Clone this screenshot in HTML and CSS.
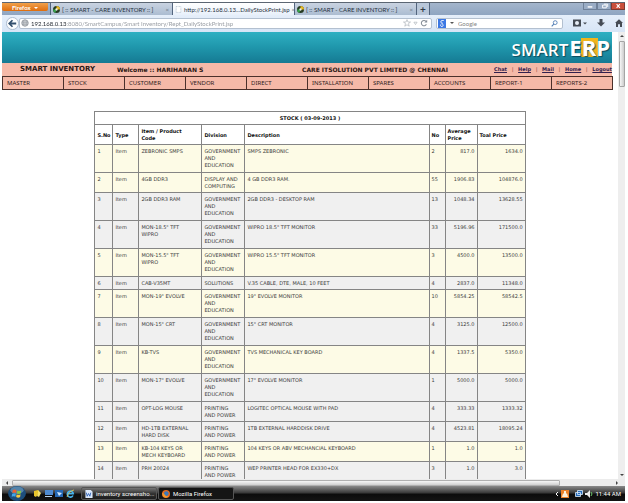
FILE: index.html
```html
<!DOCTYPE html>
<html lang="en">
<head>
<meta charset="utf-8">
<title>Smart Inventory - Daily Stock</title>
<link rel="stylesheet" href="styles.css">
</head>
<body>
<header class="tabs">
  <button class="firefox">Firefox <span class="caret"></span></button>
  <button class="tab"><svg class="fav" viewBox="0 0 12 12"><circle cx="6" cy="6" r="6" fill="#263b22"/><path d="M6 6V0a6 6 0 0 1 6 6z" fill="#e8b820"/><path d="M6 6H0a6 6 0 0 0 4 5.600z" fill="#35a34a"/><circle cx="6" cy="6" r="2" fill="#f4f4e8"/></svg><span>[ :: SMART - CARE INVENTORY :: ]</span><i>×</i></button>
  <button class="tab active"><svg class="fav" viewBox="0 0 12 12"><path d="M2 1h8v10H2z" fill="#fff" stroke="#9ab" stroke-dasharray="1.500 1"/></svg><span>http://192.168.0.13...DailyStockPrint.jsp</span><i>×</i></button>
  <button class="tab"><svg class="fav" viewBox="0 0 12 12"><circle cx="6" cy="6" r="6" fill="#263b22"/><path d="M6 6V0a6 6 0 0 1 6 6z" fill="#e8b820"/><path d="M6 6H0a6 6 0 0 0 4 5.600z" fill="#35a34a"/><circle cx="6" cy="6" r="2" fill="#f4f4e8"/></svg><span>[ :: SMART - CARE INVENTORY :: ]</span><i>×</i></button>
  <button class="newtab" aria-label="New tab">+</button>
  <div class="winbtns">
    <button aria-label="Minimize"><svg viewBox="0 0 13 6"><path d="M4 4h5" stroke="#fff" stroke-width="1.500"/></svg></button>
    <button aria-label="Restore"><svg viewBox="0 0 13 6"><path d="M5 2h4v3H5zM6.500 1h4v3" fill="none" stroke="#fff"/></svg></button>
    <button class="close" aria-label="Close"><svg viewBox="0 0 13 6"><path d="M5 1l3.500 4M8.500 1L5 5" stroke="#fff" stroke-width="1.200"/></svg></button>
  </div>
</header>
<div class="toolbar">
  <button class="back" aria-label="Back"><svg viewBox="0 0 14 14"><circle cx="7" cy="7" r="6.500" fill="#fdfeff" stroke="#a9b9cc"/><path d="M11 7H4M7 3.500L3.500 7L7 10.500" fill="none" stroke="#34506e" stroke-width="1.900"/></svg></button>
  <div class="address">
    <svg class="globe" viewBox="0 0 10 10"><circle cx="5" cy="5" r="4" fill="#e5e7ea" stroke="#858b92"/><path d="M1 4h8M1 6.500h8M5 1v8M3 2v6M7 2v6" stroke="#8c9299" stroke-width=".7"/></svg>
    <input class="url" aria-label="Address" value="192.168.0.13:8080/SmartCampus/Smart Inventory/Rept_DailyStockPrint.jsp">
    <svg class="star" viewBox="0 0 10 10"><path d="M5 .8l1.200 3h3.200L6.800 5.800l1 3.200L5 7.200 2.200 9l1-3.200L.6 3.800h3.200z" fill="#fff" stroke="#a7adb5" stroke-width=".8"/></svg>
    <svg class="drop" viewBox="0 0 6 10"><path d="M1 4h4L3 7z" fill="#fff" stroke="#a0a7af" stroke-width=".7"/></svg>
    <svg class="reload" viewBox="0 0 10 10"><path d="M8 6.500A3.300 3.300 0 1 1 7.500 3" fill="none" stroke="#848c96" stroke-width="1.300"/><path d="M9 .8v3.600H5.500z" fill="#848c96"/></svg>
  </div>
  <div class="search">
    <svg class="google" viewBox="0 0 8 9"><path d="M0 0h8v9H0z" fill="#3c78e4"/><path d="M5.800 1.500H4a1.300 1.300 0 1 0 .6 2.500q-1 .8 0 1.200A1.300 1.300 0 1 1 3 5.300" fill="none" stroke="#fff" stroke-width=".8"/></svg>
    <span class="caret dark"></span>
    <input class="query" aria-label="Search" placeholder="Google">
    <svg class="lens" viewBox="0 0 8 8"><circle cx="4.800" cy="3" r="2.200" fill="none" stroke="#4f7db5"/><path d="M3.200 4.700L.8 7.300" stroke="#4f7db5" stroke-width="1.200"/></svg>
  </div>
  <button class="tool wide" aria-label="Bookmarks"><svg viewBox="0 0 14 8"><path d="M0 .5h8v7H0z" fill="#454b54"/><circle cx="4" cy="4" r="2" fill="#e8eef6"/><path d="M10 3.500h4l-2 2z" fill="#454b54"/></svg></button>
  <button class="tool" aria-label="Downloads"><svg viewBox="0 0 8 8"><path d="M2.500 0h3v3.500H8L4 7.500 0 3.500h2.500z" fill="#454b54"/></svg></button>
  <button class="tool" aria-label="Home"><svg viewBox="0 0 8 8"><path d="M4 .2L8 4H7v4H5V5.200H3V8H1V4H0z" fill="#454b54"/></svg></button>
</div>
<div class="view">
  <main class="page">
    <div class="banner"><div class="logo">SMART<b>E<em>R</em>P</b></div></div>
    <div class="infobar">
      <strong class="app">SMART INVENTORY</strong>
      <strong class="welcome">Welcome :: HARIHARAN S</strong>
      <strong class="company">CARE ITSOLUTION PVT LIMITED @ CHENNAI</strong>
      <nav class="links"><a href="#">Chat</a>|<a href="#">Help</a>|<a href="#">Mail</a>|<a href="#">Home</a>|<a href="#">Logout</a></nav>
    </div>
    <nav class="menu"><a href="#">MASTER</a><a href="#">STOCK</a><a href="#">CUSTOMER</a><a href="#">VENDOR</a><a href="#">DIRECT</a><a href="#">INSTALLATION</a><a href="#">SPARES</a><a href="#">ACCOUNTS</a><a href="#">REPORT-1</a><a href="#">REPORTS-2</a></nav>
    <table class="stock">
      <colgroup><col class="c-sno"><col class="c-type"><col class="c-item"><col class="c-div"><col><col class="c-no"><col class="c-avg"><col class="c-total"></colgroup>
      <thead>
        <tr class="one"><th class="title" colspan="8">STOCK ( 03-09-2013 )</th></tr>
        <tr class="two"><th>S.No</th><th>Type</th><th>Item / Product<br>Code</th><th>Division</th><th>Description</th><th>No</th><th>Average<br>Price</th><th>Toal Price</th></tr>
      </thead>
      <tbody>
        <tr class="three cream"><td>1</td><td>Item</td><td>ZEBRONIC SMPS</td><td>GOVERNMENT<br>AND<br>EDUCATION</td><td>SMPS ZEBRONIC</td><td>2</td><td>817.0</td><td>1634.0</td></tr>
        <tr class="two cream"><td>2</td><td>Item</td><td>4GB DDR3</td><td>DISPLAY AND<br>COMPUTING</td><td>4 GB DDR3 RAM.</td><td>55</td><td>1906.83</td><td>104876.0</td></tr>
        <tr class="three"><td>3</td><td>Item</td><td>2GB DDR3 RAM</td><td>GOVERNMENT<br>AND<br>EDUCATION</td><td>2GB DDR3 - DESKTOP RAM</td><td>13</td><td>1048.34</td><td>13628.55</td></tr>
        <tr class="three"><td>4</td><td>Item</td><td>MON-18.5" TFT<br>WIPRO</td><td>GOVERNMENT<br>AND<br>EDUCATION</td><td>WIPRO 18.5" TFT MONITOR</td><td>33</td><td>5196.96</td><td>171500.0</td></tr>
        <tr class="three cream"><td>5</td><td>Item</td><td>MON-15.5" TFT<br>WIPRO</td><td>GOVERNMENT<br>AND<br>EDUCATION</td><td>WIPRO 15.5" TFT MONITOR</td><td>3</td><td>4500.0</td><td>13500.0</td></tr>
        <tr class="one"><td>6</td><td>Item</td><td>CAB-V35MT</td><td>SOLUTIONS</td><td>V.35 CABLE, DTE, MALE, 10 FEET</td><td>4</td><td>2837.0</td><td>11348.0</td></tr>
        <tr class="three cream"><td>7</td><td>Item</td><td>MON-19" EVOLVE</td><td>GOVERNMENT<br>AND<br>EDUCATION</td><td>19" EVOLVE MONITOR</td><td>10</td><td>5854.25</td><td>58542.5</td></tr>
        <tr class="three"><td>8</td><td>Item</td><td>MON-15" CRT</td><td>GOVERNMENT<br>AND<br>EDUCATION</td><td>15" CRT MONITOR</td><td>4</td><td>3125.0</td><td>12500.0</td></tr>
        <tr class="three cream"><td>9</td><td>Item</td><td>KB-TVS</td><td>GOVERNMENT<br>AND<br>EDUCATION</td><td>TVS MECHANICAL KEY BOARD</td><td>4</td><td>1337.5</td><td>5350.0</td></tr>
        <tr class="three"><td>10</td><td>Item</td><td>MON-17" EVOLVE</td><td>GOVERNMENT<br>AND<br>EDUCATION</td><td>17" EVOLVE MONITOR</td><td>1</td><td>5000.0</td><td>5000.0</td></tr>
        <tr class="two"><td>11</td><td>Item</td><td>OPT-LOG MOUSE</td><td>PRINTING<br>AND POWER</td><td>LOGITEC OPTICAL MOUSE WITH PAD</td><td>4</td><td>333.33</td><td>1333.32</td></tr>
        <tr class="two"><td>12</td><td>Item</td><td>HD-1TB EXTERNAL<br>HARD DISK</td><td>PRINTING<br>AND POWER</td><td>1TB EXTERNAL HARDDISK DRIVE</td><td>4</td><td>4523.81</td><td>18095.24</td></tr>
        <tr class="two cream"><td>13</td><td>Item</td><td>KB-104 KEYS OR<br>MECH KEYBOARD</td><td>PRINTING<br>AND POWER</td><td>104 KEYS OR ABV MECHANCIAL KEYBOARD</td><td>1</td><td>1.0</td><td>1.0</td></tr>
        <tr class="two"><td>14</td><td>Item</td><td>PRH 20024</td><td>PRINTING<br>AND POWER</td><td>WEP PRINTER HEAD FOR EX330+DX</td><td>3</td><td>1.0</td><td>3.0</td></tr>
      </tbody>
    </table>
  </main>
  <div class="vscroll"><svg viewBox="0 0 6 6"><path d="M1 4h4L3 2z" fill="#444"/></svg><div class="vthumb"></div><svg class="end" viewBox="0 0 6 6"><path d="M1 2h4L3 4z" fill="#444"/></svg></div>
</div>
<div class="hscroll"><svg viewBox="0 0 6 6"><path d="M4 1v4L2 3z" fill="#444"/></svg><div class="hthumb"></div><svg class="end" viewBox="0 0 6 6"><path d="M2 1v4l2-2z" fill="#444"/></svg></div>
<footer class="taskbar">
  <button class="start" aria-label="Start"><svg viewBox="0 0 20 16"><ellipse cx="10" cy="8" rx="9.500" ry="8" fill="#1d4e7c"/><ellipse cx="10" cy="4.500" rx="7" ry="4" fill="#6d9bbd" opacity=".7"/><path d="M5.500 4.500q2-1.500 4 0L9 7.600q-2-1.200-4 0z" fill="#ee6131"/><path d="M10.300 4.800q2 1.200 4.200 0L14 8q-2 1-4.200 0z" fill="#8cc63f"/><path d="M4.800 8.300q2-1.200 4 0l-.5 3.200q-2-1.200-4 0z" fill="#41a6e8"/><path d="M9.600 8.700q2 1.200 4.200 0l-.5 3.100q-2 1.200-4.200 0z" fill="#fbc93d"/></svg></button>
  <button class="quick" aria-label="Messenger"><svg viewBox="0 0 9 9"><path d="M1 2l4-1 1 3-3 4-2-1z" fill="#e9c52c"/><path d="M5 1l3 3-2 4-2-1 1-3z" fill="#f6e26c"/></svg></button>
  <button class="quick" aria-label="Show desktop"><svg viewBox="0 0 9 9"><path d="M1 1h8v5H1z" fill="#4f8bd0"/><path d="M1 7h7v1H1z" fill="#b8d2ea"/></svg></button>
  <button class="quick" aria-label="Switch windows"><svg viewBox="0 0 9 9"><path d="M0 1h8v7H0z" fill="#2568b4"/><path d="M2 3l5 1-3 3z" fill="#cfe5f8"/></svg></button>
  <button class="quick" aria-label="Internet Explorer"><svg viewBox="0 0 9 9"><path d="M7 6.500A3 3 0 1 1 7.300 4.800H2" fill="none" stroke="#46b3ed" stroke-width="1.600"/><path d="M1 8Q3 2 8 1" fill="none" stroke="#e8cf55" stroke-width=".8"/></svg></button>
  <button class="task"><svg viewBox="0 0 8 9"><path d="M0 0h6l2 2v7H0z" fill="#dce9fb"/><path d="M1 3l1 4 1.500-3L5 7l1-4" fill="none" stroke="#2b5fb5"/></svg>inventory screensho...</button>
  <button class="task current"><svg viewBox="0 0 8 8"><circle cx="4" cy="4" r="4" fill="#e66a1f"/><circle cx="4.300" cy="3.600" r="2.300" fill="#3b79bd"/><path d="M0 3q2 0 3 2t4 1Q4 9 1 6.500z" fill="#f39a2d"/></svg>Mozilla Firefox</button>
  <div class="tray">
    <svg class="chev" viewBox="0 0 4 8"><path d="M3 2L1 4l2 2" fill="none" stroke="#fff"/></svg>
    <svg viewBox="0 0 8 8"><path d="M0 0h8v8H0z" fill="#ee8228"/><path d="M3 1h2v2.500h1L7 7H1l1-3.500h1z" fill="#fff0d8"/></svg>
    <svg class="net" viewBox="0 0 8 8"><path d="M2.500 .5h5v4h-5zM.5 2.500h5v4h-5z" fill="#276bb9" stroke="#dcecfb" stroke-width=".8"/></svg>
    <svg viewBox="0 0 8 8"><path d="M0 3h2l3-3v8L2 5H0z" fill="#eee"/><path d="M6 2q2 2 0 4" fill="none" stroke="#68c568"/></svg>
    <span>11:44 AM</span>
  </div>
</footer>
</body>
</html>
```
FILE: styles.css
```css
* { box-sizing: border-box; }
body {
  margin: 0;
  padding: 2px 3px 2px 2px;
  height: 100vh;
  display: flex;
  flex-direction: column;
  overflow: hidden;
  background: #fff;
  color: #222;
  font-family: "DejaVu Sans", Verdana, sans-serif;
  font-size: 5px;
  line-height: 7px;
}
button, input { font: inherit; margin: 0; padding: 0; border: 0; background: none; }
svg { display: block; flex: none; }
a { color: inherit; text-decoration: none; }

/* browser chrome */
.tabs {
  flex: none;
  display: flex;
  height: 13px;
  border-top: 1px solid #5b6673;
  background: linear-gradient(#a3b5cc, #8fa5c1);
  font-family: Lato, sans-serif;
  font-size: 6px;
}
.firefox {
  width: 46px;
  height: 8px;
  margin-right: 2px;
  border-radius: 0 0 2px 2px;
  background: linear-gradient(#f0a04b, #df6d0d);
  color: #fff;
  font-weight: bold;
  line-height: 7px;
}
.caret { display: inline-block; border: 2px solid transparent; border-top-color: #fff; border-bottom: 0; vertical-align: middle; margin-left: 2px; }
.caret.dark { border-top-color: #555; }
.tab {
  flex: 0 0 122px;
  min-width: 0;
  display: flex;
  align-items: center;
  gap: 2px;
  padding: 0 3px 0 2px;
  border-left: 1px solid #53657e;
  background: linear-gradient(#c9d3e1, #abbcd1);
  color: #26303c;
  white-space: nowrap;
}
.tab span { flex: 1; text-align: left; }
.tab i { color: #69737f; font-style: normal; }
.tab.active { background: linear-gradient(#fff, #e8f0fa); }
.fav { width: 7px; height: 7px; }
.newtab { width: 14px; border: solid #53657e; border-width: 0 1px; background: #b9c7d9; color: #323b46; font-size: 10px; font-weight: bold; line-height: 10px; }
.winbtns { display: flex; height: 7px; margin-left: auto; }
.winbtns button { width: 14px; border: 1px solid #6f819a; border-top: 0; background: #9aadc6; }
.winbtns svg { width: 12px; height: 6px; }
.winbtns .close { background: #c94f3b; border-color: #7d3a31; }

.toolbar {
  flex: none;
  display: flex;
  align-items: center;
  gap: 4px;
  height: 17px;
  padding: 0 2px 1px 4px;
  background: linear-gradient(#e5eefa, #d7e5f6);
  font-family: Lato, sans-serif;
  font-size: 6px;
}
.back svg { width: 13px; height: 13px; }
.address, .search {
  display: flex;
  align-items: center;
  height: 11px;
  border: 1px solid #b3c0d0;
  border-radius: 2px;
  background: #fff;
}
.address { flex: 1; margin-left: -4px; padding: 0 3px 0 1px; gap: 2px; }
.search { flex: 0 0 127px; padding: 0 4px 0 1px; gap: 2px; }
.globe, .star, .reload { width: 8px; height: 8px; }
.drop { width: 5px; height: 8px; }
.url {
  flex: 1;
  min-width: 0;
  height: 9px;
  background: linear-gradient(to right, #20262e 36px, #92979e 36px);
  background-clip: text;
  -webkit-background-clip: text;
  color: transparent;
}
.query { flex: 1; min-width: 0; height: 9px; padding-left: 2px; }
.query::placeholder { color: #858585; }
.google { width: 8px; height: 9px; }
.lens { width: 7px; height: 7px; }
.tool { margin-left: 6px; }
.tool svg { width: 8px; height: 8px; }
.tool.wide svg { width: 14px; }

/* page area */
.view { flex: 1; min-height: 0; display: flex; }
.page { flex: 1; min-width: 0; overflow: hidden; }
.banner {
  display: flex;
  justify-content: flex-end;
  height: 31px;
  margin-right: 6px;
  padding-right: 2px;
  background: linear-gradient(#2fb0c2, #1f96ab 50%, #157a93);
}
.logo {
  display: flex;
  align-items: baseline;
  color: #fff;
  font-family: "Open Sans", sans-serif;
  font-size: 17px;
  font-weight: 600;
  line-height: 36px;
  text-shadow: 1px 1px 1px #0b4a5c;
}
.logo b { padding-left: 1px; font-size: 22px; font-weight: 700; line-height: 30px; background: linear-gradient(#f0b51c, #f0b51c) 13px 6px / 17px 19px no-repeat; }
.logo em { font-style: normal; }
.infobar {
  display: flex;
  align-items: center;
  height: 13px;
  margin-right: 6px;
  background: #f5b9a8;
  color: #2b1714;
  font-size: 6px;
  white-space: nowrap;
}
.app { width: 97px; margin-left: 18px; font-size: 7px; }
.welcome { width: 185px; }
.links { display: flex; justify-content: space-between; width: 118px; margin-left: auto; font-size: 5px; font-weight: bold; color: #a05a50; }
.links a { color: #32204e; text-decoration: underline; }
.menu { display: grid; grid-template-columns: repeat(10, 1fr); margin-right: 5px; border: 1px solid #4b302b; border-right: 0; background: #f5b9a8; font-family: "Noto Sans", sans-serif; font-size: 6px; color: #30201c; }
.menu a { height: 12px; padding-left: 4px; border-right: 1px solid #4b302b; line-height: 12px; }

.stock { width: 70%; margin: 21px auto 0; border-collapse: collapse; table-layout: fixed; }
.c-sno { width: 18px; }
.c-type { width: 26px; }
.c-item { width: 63px; }
.c-div { width: 43px; }
.c-no { width: 16px; }
.c-avg { width: 32px; }
.c-total { width: 48px; }
.stock th, .stock td { padding: 3px 2px 2px; border: 1px solid #858585; text-align: left; white-space: nowrap; vertical-align: top; }
.stock th { vertical-align: middle; color: #111; }
.stock .title { text-align: center; }
.stock td { background: #f0f0f0; color: #3c3c3c; }
.stock .cream td { background: #fdfbe6; }
.stock td:nth-child(n+7) { text-align: right; }
.one { height: 13px; }
.two { height: 20px; }
.three { height: 28px; }

.vscroll { flex: 0 0 7px; display: flex; flex-direction: column; align-items: center; background: #eee; padding: 1px 0; }
.vscroll svg, .hscroll svg { width: 6px; height: 6px; }
.vthumb { width: 6px; height: 46px; margin-top: 2px; border: 1px solid #a5a5a5; border-radius: 1px; background: linear-gradient(to right, #f6f6f6, #ccc); }
.vscroll .end { margin-top: auto; }
.hscroll { flex: none; display: flex; align-items: center; height: 7px; padding: 0 5px 0 2px; background: #ececec; }
.hthumb { width: 89%; height: 6px; margin-left: 2px; border: 1px solid #b0b0b0; border-radius: 1px; background: linear-gradient(#f7f7f7, #cfcfcf); }
.hscroll .end { margin-left: auto; }

/* taskbar */
.taskbar { flex: none; display: flex; align-items: center; height: 15px; background: linear-gradient(#8a8a8a, #3a3a3a 45%, #0c0c0c 55%, #141414); color: #fff; font-family: Roboto, sans-serif; font-size: 6px; }
.start { margin: 0 6px 0 5px; }
.start svg { width: 20px; height: 15px; }
.quick { width: 11px; }
.quick svg { width: 9px; height: 9px; }
.task { display: flex; align-items: center; gap: 3px; flex: 0 0 76px; min-width: 0; height: 13px; margin-left: 1px; padding-left: 3px; border: 1px solid #555; border-radius: 2px; background: linear-gradient(#777, #333 50%, #1c1c1c); color: #fff; white-space: nowrap; }
.quick + .task { margin-left: 4px; }
.task.current { background: #151515; }
.task svg { width: 8px; height: 8px; }
.tray { display: flex; align-items: center; gap: 2px; margin-left: auto; padding-right: 4px; }
.tray svg { width: 8px; height: 8px; }
.tray .chev { width: 4px; }
.tray .net { margin-left: 4px; }
```
